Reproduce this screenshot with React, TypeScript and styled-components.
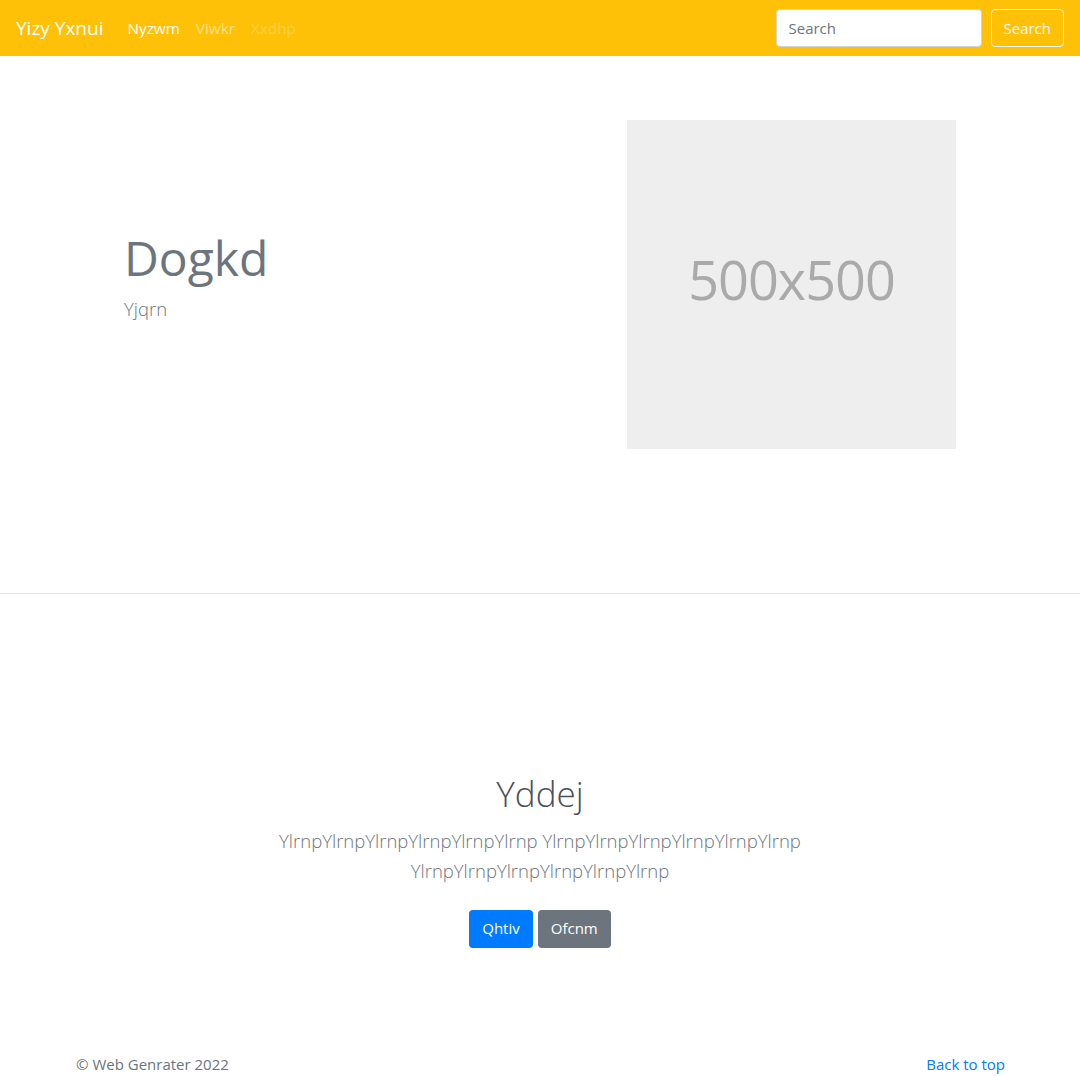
import React from "react";
import styled, { createGlobalStyle } from "styled-components";

const GlobalStyle = createGlobalStyle`
  *, *::before, *::after { box-sizing: border-box; }
  html, body { margin: 0; padding: 0; }
  body {
    font-family: "Open Sans", "Noto Sans", sans-serif;
    font-size: 16px;
    line-height: 1.5;
    color: #212529;
    background: #fff;
  }
`;

const Navbar = styled.nav`
  display: flex;
  align-items: center;
  height: 56px;
  padding: 8px 16px;
  background: #ffc107;
`;

const Brand = styled.a`
  font-size: 19px;
  line-height: 30px;
  color: #fff;
  margin-right: 16px;
  text-decoration: none;
`;

const NavList = styled.ul`
  display: flex;
  list-style: none;
  margin: 0;
  padding: 0;
  flex: 1;
`;

const NavLink = styled.a<{ $state: "active" | "normal" | "disabled" }>`
  display: block;
  padding: 8px;
  font-size: 15.3px;
  font-weight: 500;
  text-decoration: none;
  color: ${(p) =>
    p.$state === "active"
      ? "#fff"
      : p.$state === "normal"
      ? "rgba(255,255,255,0.5)"
      : "rgba(255,255,255,0.25)"};
`;

const SearchForm = styled.form`
  display: flex;
  align-items: center;
  gap: 9px;
  margin: 0;
`;

const SearchInput = styled.input`
  width: 206px;
  height: 38px;
  padding: 6px 12px;
  font-family: inherit;
  font-size: 15px;
  color: #495057;
  background: #fff;
  border: 1px solid #ced4da;
  border-radius: 4px;
  outline: none;
  &::placeholder { color: #6c757d; }
`;

const OutlineButton = styled.button`
  height: 38px;
  padding: 6px 12px;
  font-family: inherit;
  font-size: 15px;
  color: #f8f9fa;
  background: transparent;
  border: 1px solid #f8f9fa;
  border-radius: 4px;
`;

const Hero = styled.section`
  padding: 64px 0 144px;
  border-bottom: 1px solid #e5e5e5;
`;

const Container = styled.div`
  width: 960px;
  margin: 0 auto;
  padding: 0 15px;
`;

const HeroRow = styled.div`
  display: grid;
  grid-template-columns: 1fr 1fr;
  align-items: center;
`;

const HeroText = styled.div`
  padding-left: 49px;
`;

const HeroTitle = styled.h1`
  margin: 0 0 8px;
  font-size: 48px;
  font-weight: 400;
  line-height: 1.2;
  color: #6c757d;
`;

const Lead = styled.p<{ $center?: boolean }>`
  margin: 0 0 16px;
  font-size: 18.5px;
  font-weight: 300;
  line-height: 30px;
  color: #6c757d;
  text-align: ${(p) => (p.$center ? "center" : "left")};
`;

const HeroMedia = styled.div`
  display: flex;
  justify-content: flex-end;
  padding-right: 49px;
`;

const Placeholder = styled.div`
  width: 329px;
  height: 329px;
  display: flex;
  align-items: center;
  justify-content: center;
  padding-bottom: 10px;
  background: #eee;
  color: #aaa;
  font-size: 54px;
  letter-spacing: -1px;
`;

const Jumbotron = styled.section`
  padding: 176px 15px 48px;
  text-align: center;
`;

const JumboInner = styled.div`
  max-width: 610px;
  margin: 0 auto;
`;

const JumboTitle = styled.h1`
  margin: 0 0 8px;
  font-size: 35px;
  font-weight: 300;
  line-height: 48px;
  color: #495057;
`;

const ButtonRow = styled.p`
  margin: 0;
  display: flex;
  justify-content: center;
  gap: 5px;
`;

const SolidButton = styled.a<{ $variant: "primary" | "secondary" }>`
  display: inline-block;
  margin: 8px 0;
  height: 38px;
  padding: 6px 13px;
  font-size: 15px;
  line-height: 24px;
  color: #fff;
  text-decoration: none;
  border-radius: 4px;
  background: ${(p) => (p.$variant === "primary" ? "#007bff" : "#6c757d")};
`;

const Footer = styled.footer`
  padding: 48px 0;
  color: #6c757d;
`;

const FooterRow = styled.div`
  display: flex;
  justify-content: space-between;
  align-items: center;
  font-size: 15px;
  line-height: 24px;
  padding-left: 1px;
`;

const FooterText = styled.p`
  margin: 0;
`;

const FooterLink = styled.a`
  color: #007bff;
  text-decoration: none;
`;

const para =
  "YlrnpYlrnpYlrnpYlrnpYlrnpYlrnp YlrnpYlrnpYlrnpYlrnpYlrnpYlrnp YlrnpYlrnpYlrnpYlrnpYlrnpYlrnp";

export default function App() {
  return (
    <>
      <GlobalStyle />
      <Navbar>
        <Brand href="#">Yizy Yxnui</Brand>
        <NavList>
          <li><NavLink $state="active" href="#">Nyzwm</NavLink></li>
          <li><NavLink $state="normal" href="#">Viwkr</NavLink></li>
          <li><NavLink $state="disabled" href="#">Xxdhp</NavLink></li>
        </NavList>
        <SearchForm onSubmit={(e) => e.preventDefault()}>
          <SearchInput type="search" placeholder="Search" aria-label="Search" />
          <OutlineButton type="submit">Search</OutlineButton>
        </SearchForm>
      </Navbar>

      <Hero>
        <Container>
          <HeroRow>
            <HeroText>
              <HeroTitle>Dogkd</HeroTitle>
              <Lead>Yjqrn</Lead>
            </HeroText>
            <HeroMedia>
              <Placeholder>500x500</Placeholder>
            </HeroMedia>
          </HeroRow>
        </Container>
      </Hero>

      <Jumbotron>
        <JumboInner>
          <JumboTitle>Yddej</JumboTitle>
          <Lead $center>{para}</Lead>
          <ButtonRow>
            <SolidButton $variant="primary" href="#">Qhtiv</SolidButton>
            <SolidButton $variant="secondary" href="#">Ofcnm</SolidButton>
          </ButtonRow>
        </JumboInner>
      </Jumbotron>

      <Footer>
        <Container>
          <FooterRow>
            <FooterText>© Web Genrater 2022</FooterText>
            <FooterLink href="#">Back to top</FooterLink>
          </FooterRow>
        </Container>
      </Footer>
    </>
  );
}
